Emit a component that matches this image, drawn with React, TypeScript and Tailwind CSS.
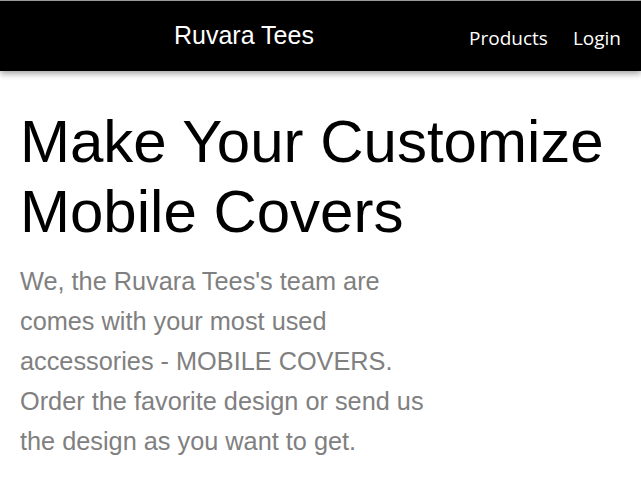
export default function App() {
  return (
    <div className="min-h-screen bg-white font-['Liberation_Sans',Arial,sans-serif]">
      <header className="flex h-[71px] items-center border-t border-[#9a9a9a] bg-black pl-[174px] pr-5 shadow-[0_3px_6px_rgba(0,0,0,0.35)]">
        <a className="pb-[1px] text-[25px] leading-none text-white">Ruvara Tees</a>
        <nav className="ml-auto flex gap-[25px] pt-[4px] font-['Open_Sans','Noto_Sans',sans-serif] text-[19px] text-white">
          <a>Products</a>
          <a>Login</a>
        </nav>
      </header>
      <main className="px-5 pt-[36px]">
        <h1 className="text-[60px] leading-[70px] text-black">
          Make Your Customize
          <br />
          Mobile Covers
        </h1>
        <p className="mt-[14px] max-w-[430px] text-[25.3px] leading-[40px] text-[#808080]">
          We, the Ruvara Tees's team are comes with your most used accessories - MOBILE COVERS. Order the favorite design or send us the design as you want to get.
        </p>
      </main>
    </div>
  );
}
